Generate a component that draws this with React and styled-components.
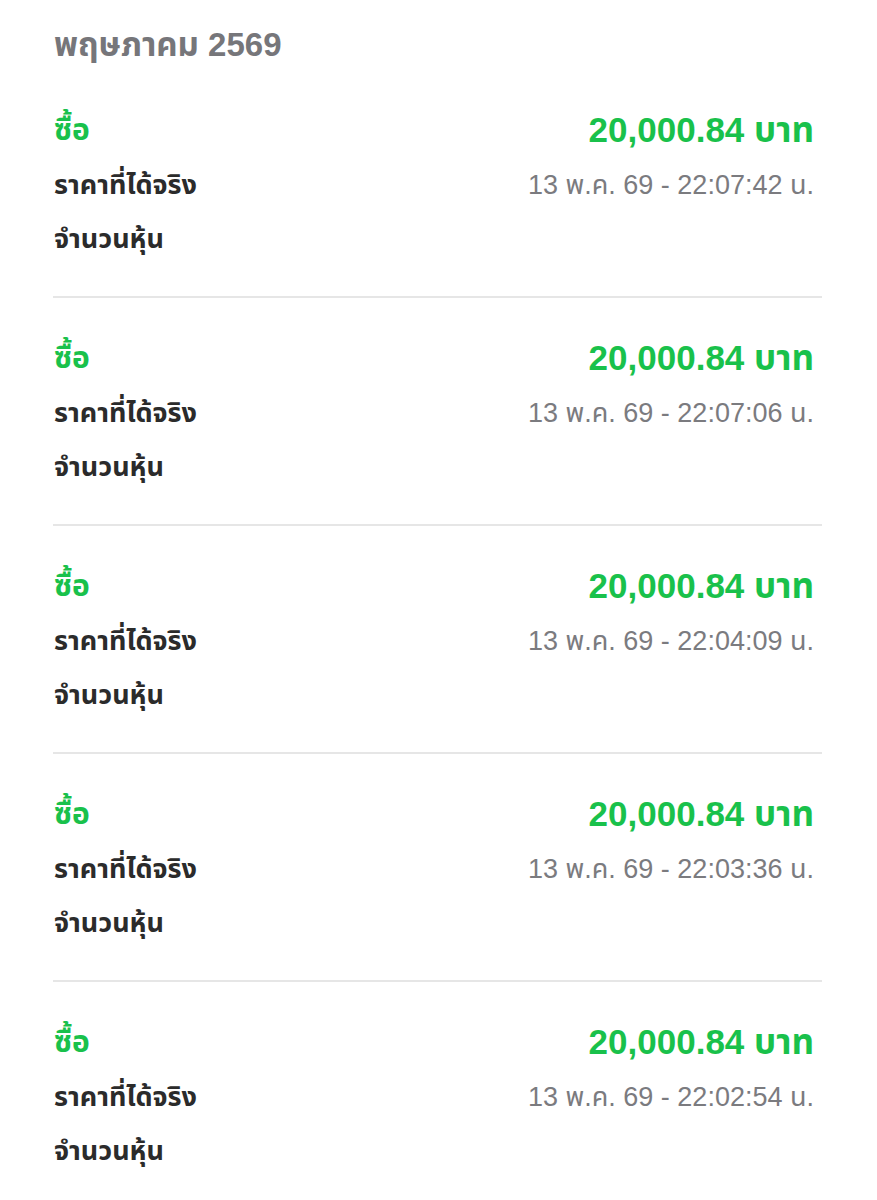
import React from "react";
import styled, { createGlobalStyle } from "styled-components";

const GlobalStyle = createGlobalStyle`
  body {
    margin: 0;
    background: #ffffff;
    font-family: "Liberation Sans", "Noto Sans", "Noto Sans Thai", sans-serif;
  }
`;

const Page = styled.div`
  padding: 25px 55px 0 53px;
`;

const MonthTitle = styled.div`
  font-size: 33px;
  font-weight: 700;
  line-height: 40px;
  color: #76767a;
  padding-left: 1px;
  margin-bottom: 5px;
`;

const Entry = styled.div`
  display: grid;
  grid-template-columns: 1fr auto;
  grid-auto-rows: 54px;
  align-items: center;
  padding: 34px 8px 30px 1px;
  border-bottom: ${(props) => (props.last ? "none" : "2px solid #e6e6e6")};
`;

const Kind = styled.div`
  font-size: 30px;
  font-weight: 700;
  color: #19c14b;
`;

const Amount = styled.div`
  font-size: 35px;
  font-weight: 700;
  color: #19c14b;
  text-align: right;
`;

const Label = styled.div`
  font-size: 27px;
  font-weight: 700;
  color: #2b2b2b;
`;

const Stamp = styled.div`
  font-size: 27px;
  font-weight: 400;
  color: #7b7b7f;
  text-align: right;
`;

const entries = [
  "13 พ.ค. 69 - 22:07:42 น.",
  "13 พ.ค. 69 - 22:07:06 น.",
  "13 พ.ค. 69 - 22:04:09 น.",
  "13 พ.ค. 69 - 22:03:36 น.",
  "13 พ.ค. 69 - 22:02:54 น.",
];

export default function App() {
  return (
    <>
      <GlobalStyle />
      <Page>
        <MonthTitle>พฤษภาคม 2569</MonthTitle>
        {entries.map((time, i) => (
          <Entry key={time} last={i === entries.length - 1}>
            <Kind>ซื้อ</Kind>
            <Amount>20,000.84 บาท</Amount>
            <Label>ราคาที่ได้จริง</Label>
            <Stamp>{time}</Stamp>
            <Label>จำนวนหุ้น</Label>
            <div />
          </Entry>
        ))}
      </Page>
    </>
  );
}
